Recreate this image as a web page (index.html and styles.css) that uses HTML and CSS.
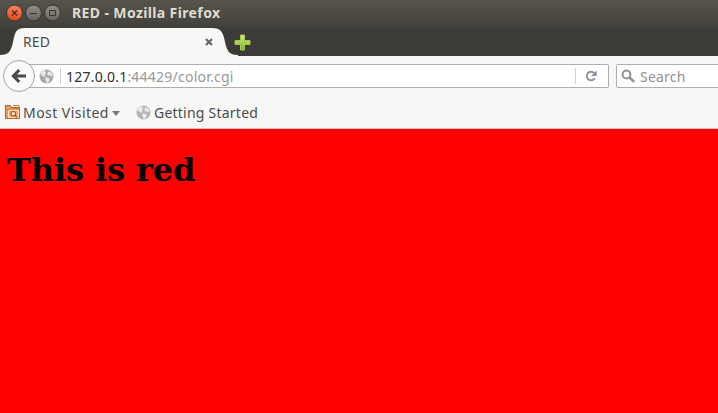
FILE: index.html
```html
<!DOCTYPE html>
<html lang="en">
<head>
<meta charset="utf-8">
<title>RED</title>
<link rel="stylesheet" href="styles.css">
</head>
<body>
<svg class="defs" width="0" height="0" aria-hidden="true">
  <symbol id="globe" viewBox="0 0 15 15">
    <circle cx="7.5" cy="7.5" r="7" fill="#a9a9a8"/>
    <path d="M1.2 5Q3 1.5 7 1L5.8 2.6 7.4 4 5.8 5.7 6.7 7.3 4.6 7.8 2.7 6.3ZM9.2 2.2 12.4 3.4 13.8 6.4 12.3 7.6 10.8 6 9 6.8 8.4 4.8ZM5.7 9 9 8.6 10.8 10.5 9.4 13.4 7.3 13.9 7 11.5Z" fill="#e9e9e8"/>
  </symbol>
</svg>
<header class="frame">
  <div class="titlebar">
    <svg class="controls" width="56" height="18" viewBox="0 0 56 18">
      <defs>
        <linearGradient id="orange" x1="0" y1="0" x2="0" y2="1"><stop stop-color="#f5845f"/><stop offset="1" stop-color="#df4a1b"/></linearGradient>
        <linearGradient id="gray" x1="0" y1="0" x2="0" y2="1"><stop stop-color="#908e85"/><stop offset="1" stop-color="#66645d"/></linearGradient>
      </defs>
      <g stroke="#33312c">
        <circle cx="9.5" cy="9" r="8" fill="url(#orange)"/>
        <circle cx="28.5" cy="9" r="8" fill="url(#gray)"/>
        <circle cx="47.5" cy="9" r="8" fill="url(#gray)"/>
      </g>
      <path d="M7 6.5l5 5m0-5l-5 5" stroke="#5c2514" stroke-width="1.3"/>
      <path d="M25 9.5h7M44.5 6.5h6v5h-6z" stroke="#393832" fill="none"/>
    </svg>
    <span class="window-title">RED - Mozilla Firefox</span>
  </div>
  <div class="tabs">
    <div class="tab">
      <svg class="tab-shape" width="240" height="29" viewBox="0 0 240 29"><path d="M0 29V28C9 28 11 24 13 15C15 5 16 1 25 1H212C221 1 223 5 225 15C227 24 229 28 238 28V29Z" fill="#f7f7f6"/></svg>
      <span class="tab-label">RED</span>
      <svg class="tab-close" width="8" height="8" viewBox="0 0 8 8"><path d="M1 1l6 6M7 1L1 7" stroke="#666" stroke-width="2.2"/></svg>
    </div>
    <svg class="new-tab" width="17" height="17" viewBox="0 0 17 17">
      <defs><linearGradient id="green" x1="0" y1="0" x2="0" y2="1"><stop stop-color="#d3ec72"/><stop offset="1" stop-color="#83b52b"/></linearGradient></defs>
      <path d="M6.5 1h4v5.5H16v4h-5.5V16h-4v-5.5H1v-4h5.5z" fill="url(#green)" stroke="#a1c95c"/>
    </svg>
  </div>
</header>
<nav class="navbar">
  <button class="back" aria-label="Back"><svg width="16" height="16" viewBox="0 0 16 16"><path d="M8.2 2L2.5 8l5.7 6M3 8h12" fill="none" stroke="#4b4b4b" stroke-width="3.2"/></svg></button>
  <div class="address">
    <svg class="site-icon" width="15" height="15"><use href="#globe"/></svg>
    <span class="rule"></span>
    <span class="url"><b>127.0.0.1</b>:44429/color.cgi</span>
    <span class="rule reload-rule"></span>
    <svg class="reload" width="12" height="12" viewBox="0 0 12 12"><path d="M9.8 8.2A4.3 4.3 0 1 1 9.2 3" fill="none" stroke="#8a929c" stroke-width="1.9"/><path d="M11.6.5V6H6z" fill="#8a929c"/></svg>
  </div>
  <div class="search">
    <svg width="15" height="15" viewBox="0 0 15 15"><circle cx="5.5" cy="5.5" r="3.9" fill="none" stroke="#929292" stroke-width="2"/><path d="M8.5 8.5l4.6 4.4" stroke="#929292" stroke-width="2.6"/></svg>
    <span class="search-label">Search</span>
  </div>
</nav>
<div class="bookmarks">
  <svg class="folder" width="16" height="16" viewBox="0 0 16 16">
    <path d="M.5 14.5V1.5h5l1 2h8v11z" fill="#e79a5c" stroke="#bf6420"/>
    <path d="M.5 5.5h4l1-1h9M8 1.5h6v2" fill="none" stroke="#d0813f"/>
    <path d="M3.5 6.5h10v7h-10z" fill="#eba669" stroke="#fbe6d2"/>
    <circle cx="8.3" cy="9.6" r="2.2" fill="#fff0df" stroke="#bd5d19" stroke-width="1.2"/><path d="M10 11.4l2 2" stroke="#bd5d19" stroke-width="1.4"/>
  </svg>
  <span class="visited">Most Visited</span>
  <svg class="caret" width="8" height="5" viewBox="0 0 8 5"><path d="M0 0h8L4 5z" fill="#777"/></svg>
  <svg class="bookmark-globe" width="15" height="15"><use href="#globe"/></svg>
  <span class="started">Getting Started</span>
</div>
<main><h1>This is red</h1></main>
</body>
</html>
```
FILE: styles.css
```css
* { box-sizing: border-box; }
body {
  margin: 0;
  height: 413px;
  display: flex;
  flex-direction: column;
  overflow: hidden;
  background: #f7f7f6;
  color: #4c4c4c;
  font: 14px/20px "Noto Sans", sans-serif;
  white-space: nowrap;
}
svg { display: block; flex: none; }
.defs { position: absolute; }
.frame {
  height: 56px;
  background: linear-gradient(#57544c 0, #45433d 24px, #3c3b37 30px, #3c3b37 100%);
}
.titlebar { height: 27px; padding-left: 5px; display: flex; align-items: center; }
.controls { margin-top: -2px; }
.window-title {
  margin: -1px 0 0 11px;
  color: #dfdbd2;
  font-weight: 700;
  font-size: 14px;
  letter-spacing: 0.38px;
}
.tabs { height: 29px; display: flex; align-items: center; }
.tab { position: relative; width: 233px; height: 29px; padding-left: 23px; display: flex; align-items: center; }
.tab-shape { position: absolute; left: 0; top: 0; }
.tab-label { position: relative; width: 182px; letter-spacing: 0.1px; margin-top: 1px; }
.tab-close { position: relative; margin-top: 1px; }
.new-tab { margin: 1px 0 0 1px; }
.navbar { height: 40px; display: flex; align-items: center; padding-left: 3px; }
.back {
  position: relative;
  flex: none;
  width: 32px; height: 32px;
  padding: 0;
  display: grid;
  place-items: center;
  border: 1px solid #a5a5a4;
  border-radius: 50%;
  background: #fafafa;
}
.address {
  flex: none;
  width: 580px; height: 24px;
  margin-left: -6px;
  padding-left: 10px;
  display: flex;
  align-items: center;
  border: 1px solid #aeaeab;
  border-left: 0;
  border-radius: 0 2px 2px 0;
  background: #fff;
}
.site-icon { margin-right: 1px; }
.rule { flex: none; width: 1px; height: 16px; margin: 0 5px; background: #d0d0d0; }
.reload-rule { margin: 0 9px 0 0; }
.url { flex: none; width: 509px; padding-top: 2px; color: #999; letter-spacing: 0.23px; }
.url b { color: #303030; font-weight: 400; }
.search {
  flex: none;
  width: 110px; height: 24px;
  margin-left: 7px;
  padding-left: 4px;
  display: flex;
  align-items: center;
  border: 1px solid #aeaeab;
  border-radius: 2px;
  background: #fff;
  color: #929292;
}
.search-label { padding-top: 2px; margin-left: 4px; letter-spacing: 0.2px; }
.bookmarks { height: 33px; padding-left: 5px; display: flex; align-items: center; border-bottom: 1px solid #d0c4c0; }
.visited { width: 86px; padding-top: 2px; margin-left: 2px; letter-spacing: 0.45px; }
.caret { margin: 2px 0 0 3px; }
.bookmark-globe { margin: 0 1px 0 16px; opacity: .85; }
.started { padding-top: 2px; margin-left: 2px; letter-spacing: 0.23px; }
main { flex: 1; background: #f00; padding: 22px 7px; }
h1 { margin: 0; color: #000; font: bold 32px/38px "DejaVu Serif", serif; letter-spacing: -0.1px; }
```
